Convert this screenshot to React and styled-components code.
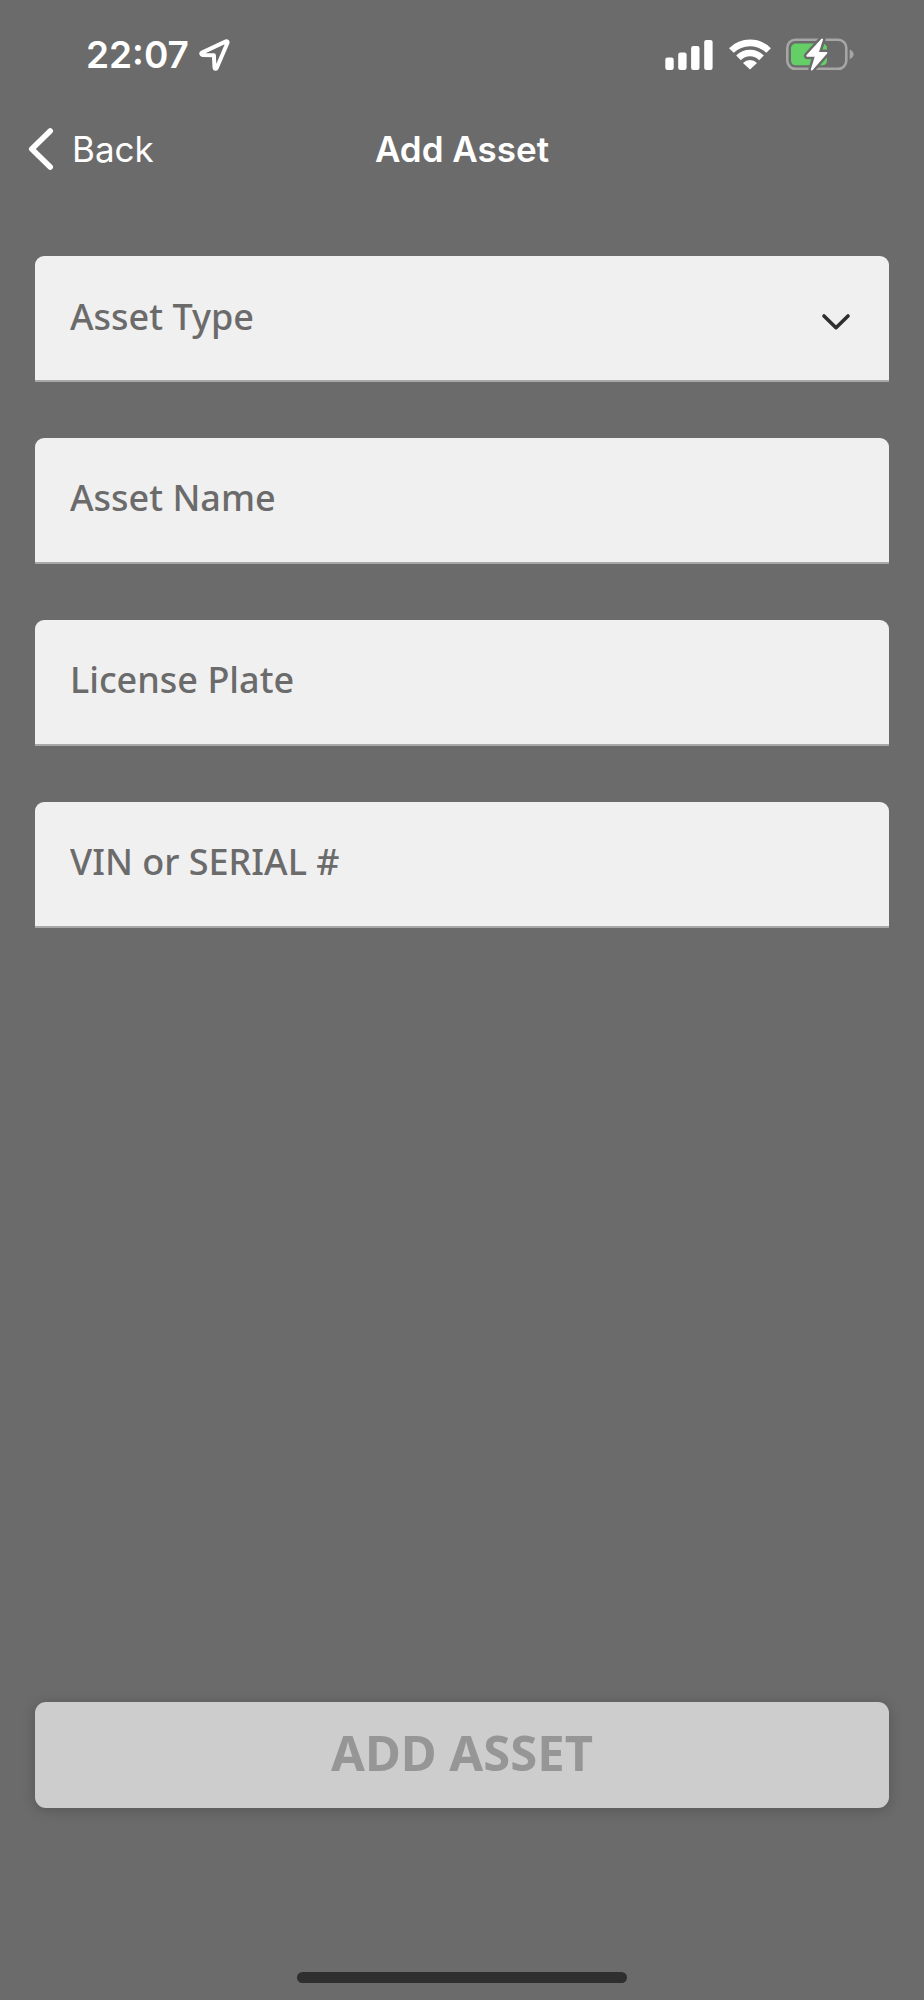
import React from "react";
import styled, { createGlobalStyle } from "styled-components";

const GlobalStyle = createGlobalStyle`
  *, *::before, *::after { box-sizing: border-box; }
  body { margin: 0; background: #6b6b6b; }
`;

const system = `Inter, "Liberation Sans", sans-serif`;
const brand = `"Noto Sans", "Open Sans", sans-serif`;

const Screen = styled.div`
  display: flex;
  flex-direction: column;
  min-height: 100vh;
  background: #6b6b6b;
  color: #fff;
  font-family: ${system};
`;

const StatusBar = styled.div`
  display: flex;
  align-items: center;
  justify-content: space-between;
  height: 110px;
  padding: 0 70px 0 86px;
`;

const StatusGroup = styled.div`
  display: flex;
  align-items: center;
  gap: ${(p) => p.$gap}px;
`;

const Clock = styled.time`
  font-size: 37px;
  font-weight: 600;
  line-height: 48px;
`;

const Icon = styled.svg`
  display: block;
  flex: none;
`;

const NavBar = styled.nav`
  display: grid;
  grid-template-columns: 1fr auto 1fr;
  align-items: center;
  height: 78px;
  padding: 0 28px;
`;

const BackButton = styled.button`
  justify-self: start;
  display: flex;
  align-items: center;
  gap: 17px;
  padding: 0;
  border: 0;
  background: none;
  color: inherit;
  font: 400 35px/44px ${system};
`;

const Title = styled.h1`
  margin: 0;
  font-size: 35px;
  font-weight: 600;
  line-height: 44px;
`;

const Form = styled.form`
  flex: 1;
  display: flex;
  flex-direction: column;
  gap: 56px;
  padding: 68px 35px 0;
`;

const Field = styled.div`
  position: relative;
`;

const controlStyle = `
  display: block;
  width: 100%;
  height: 126px;
  padding: 0 35px 6px;
  border: 0;
  border-bottom: 2px solid #a8a8a8;
  border-radius: 9px 9px 0 0;
  background: #f0f0f0;
  color: #6b6b6b;
  font: 500 36px/50px ${brand};
  outline: none;
`;

const TextInput = styled.input`
  ${controlStyle}
  &::placeholder { color: #6b6b6b; opacity: 1; }
`;

const Select = styled.select`
  ${controlStyle}
  padding-bottom: 2px;
  appearance: none;
`;

const SelectArrow = styled(Icon)`
  position: absolute;
  right: 38px;
  top: 57px;
  pointer-events: none;
`;

const SubmitButton = styled.button`
  height: 106px;
  margin-top: auto;
  padding: 0 0 6px;
  border: 0;
  border-radius: 11px;
  background: #cdcdcd;
  color: #969696;
  font: 700 49px/66px ${brand};
  box-shadow: 0 2px 14px rgba(0, 0, 0, 0.2);
`;

const HomeArea = styled.footer`
  display: flex;
  align-items: flex-end;
  justify-content: center;
  height: 192px;
  padding-bottom: 17px;
`;

const HomeIndicator = styled.div`
  width: 330px;
  height: 11px;
  border-radius: 6px;
  background: #2f2f2f;
`;

const fields = [
  { id: "asset-name", label: "Asset Name" },
  { id: "license-plate", label: "License Plate" },
  { id: "serial", label: "VIN or SERIAL #" },
];

export default function App() {
  return (
    <Screen>
      <GlobalStyle />
      <StatusBar>
        <StatusGroup $gap={10}>
          <Clock>22:07</Clock>
          <Icon width="31" height="32" viewBox="0 0 31 32" aria-hidden="true">
            <path
              d="M27 2.4 3 13.6c-1.2.6-.9 2.2.5 2.3l11.4.4.6 12.2c.1 1.4 1.7 1.6 2.2.4L28.4 4c.5-1.1-.3-2-1.4-1.6Z"
              fill="none"
              stroke="#fff"
              strokeWidth="4"
              strokeLinejoin="round"
            />
          </Icon>
        </StatusGroup>
        <StatusGroup $gap={15}>
          <Icon width="49" height="32" viewBox="0 0 49 32" fill="#fff" aria-hidden="true">
            <rect x="0.3" y="18.6" width="8.4" height="12.3" rx="2.2" />
            <rect x="13.2" y="13.6" width="8.4" height="17.3" rx="2.2" />
            <rect x="26.1" y="7.1" width="8.4" height="23.8" rx="2.2" />
            <rect x="39.2" y="0.9" width="8.4" height="30" rx="2.2" />
          </Icon>
          <Icon width="42" height="32" viewBox="0 0 42 32" aria-hidden="true">
            <g fill="none" stroke="#fff" strokeWidth="6.6">
              <path d="M2.4 11.5a26.4 26.4 0 0 1 37.2 0" />
              <path d="M9.5 18.8a16.3 16.3 0 0 1 23 0" />
            </g>
            <path d="M21 30.6 14 23.9a10 10 0 0 1 14 0Z" fill="#fff" />
          </Icon>
          <Icon width="68" height="34" viewBox="0 0 68 34" aria-hidden="true">
            <rect x="1.3" y="1.8" width="59" height="29" rx="8" fill="none" stroke="#a6a6a6" strokeWidth="2.6" />
            <path d="M63.6 11.4c2.4.8 4 2.6 4 4.9s-1.6 4.1-4 4.9Z" fill="#a6a6a6" />
            <rect x="5" y="5.6" width="36" height="21.6" rx="4.4" fill="#65cf67" />
            <path
              d="M35.2 1 20.6 17.1c-.6.7-.2 1.6.7 1.6h7.4L25 30.8c-.5 1.5.7 2.2 1.7 1.1l14.4-16.4c.6-.7.2-1.6-.7-1.6H33L36.9 2.1C37.4.6 36.2-.1 35.2 1Z"
              fill="#fff"
              stroke="#6b6b6b"
              strokeWidth="5"
              paintOrder="stroke"
            />
          </Icon>
        </StatusGroup>
      </StatusBar>

      <NavBar>
        <BackButton type="button">
          <Icon width="27" height="42" viewBox="0 0 27 42" aria-hidden="true">
            <path
              d="M22.2 3 3.8 21l18.4 18"
              fill="none"
              stroke="#fff"
              strokeWidth="5.6"
              strokeLinecap="round"
              strokeLinejoin="round"
            />
          </Icon>
          Back
        </BackButton>
        <Title>Add Asset</Title>
      </NavBar>

      <Form>
        <Field>
          <Select aria-label="Asset Type" defaultValue="">
            <option value="">Asset Type</option>
          </Select>
          <SelectArrow width="30" height="18" viewBox="0 0 30 18" aria-hidden="true">
            <path
              d="M3 3l12 11.7L27 3"
              fill="none"
              stroke="#2e2e2e"
              strokeWidth="3.6"
              strokeLinecap="round"
              strokeLinejoin="round"
            />
          </SelectArrow>
        </Field>
        {fields.map(({ id, label }) => (
          <Field key={id}>
            <TextInput id={id} type="text" aria-label={label} placeholder={label} />
          </Field>
        ))}
        <SubmitButton type="submit" disabled>
          ADD ASSET
        </SubmitButton>
      </Form>

      <HomeArea>
        <HomeIndicator />
      </HomeArea>
    </Screen>
  );
}
